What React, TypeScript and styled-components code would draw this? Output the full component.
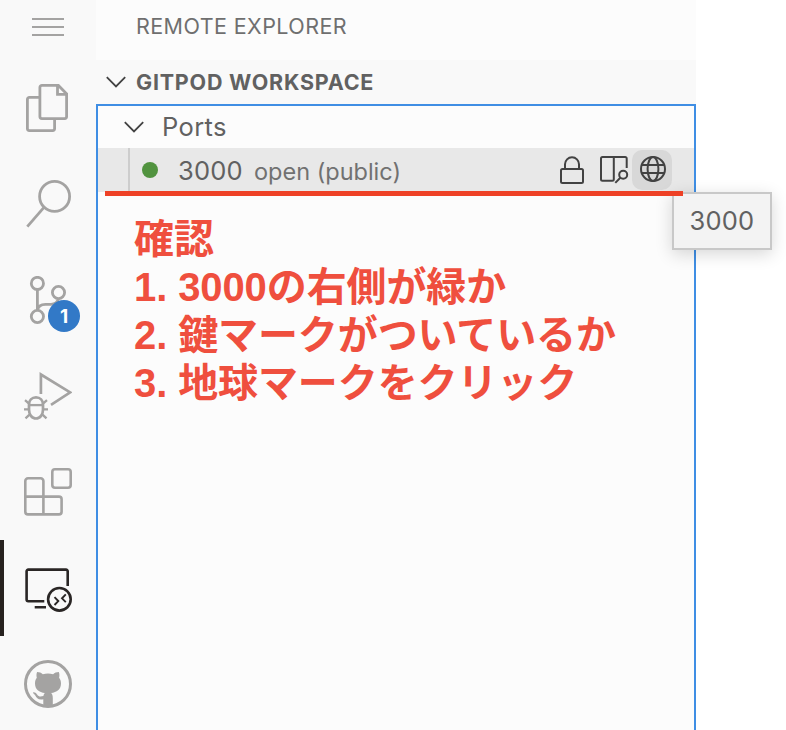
import React from "react";
import styled, { createGlobalStyle } from "styled-components";

const Global = createGlobalStyle`
  * { box-sizing: border-box; }
  html, body { margin: 0; background: #fff; overflow: hidden; }
  body { font-family: Inter, "Liberation Sans", sans-serif; color: #616161; }
  svg { display: block; }
`;

const Window = styled.div`
  display: flex;
  width: 786px;
  height: 730px;
  overflow: hidden;
`;

const ActivityBar = styled.nav`
  flex: 0 0 96px;
  display: flex;
  flex-direction: column;
  background: #f9f9f9;
`;

const MenuSlot = styled.div`
  flex: 0 0 60px;
  display: flex;
  justify-content: center;
  padding-top: 17px;
`;

const ActivityItem = styled.div<{ $active?: boolean }>`
  position: relative;
  flex: 0 0 96px;
  display: flex;
  align-items: center;
  justify-content: center;
  color: ${(p) => (p.$active ? "#2a2625" : "#a4a3a2")};
  box-shadow: ${(p) => (p.$active ? "inset 4px 0 #27221f" : "none")};
`;

const Badge = styled.span`
  position: absolute;
  left: 48px;
  top: 48px;
  width: 32px;
  height: 32px;
  border-radius: 50%;
  background: #3279c7;
  color: #fff;
  font-size: 19px;
  font-weight: 700;
  line-height: 33px;
  text-align: center;
`;

const Sidebar = styled.aside`
  flex: 0 0 600px;
  display: flex;
  flex-direction: column;
  background: #fcfcfc;
`;

const Title = styled.div`
  height: 60px;
  padding-left: 40px;
  line-height: 52px;
  font-size: 21.5px;
  letter-spacing: 0.42px;
  color: #6f6f6f;
`;

const SectionHeader = styled.div`
  display: flex;
  align-items: center;
  gap: 10px;
  height: 44px;
  padding-left: 10px;
  background: #f9f9f9;
  font-size: 21.5px;
  font-weight: 700;
  letter-spacing: 0.78px;
  color: #616161;
`;

const Tree = styled.div`
  position: relative;
  flex: 1;
  border: 2px solid #3f8ee4;
  border-bottom: 0;
`;

const GroupRow = styled.div`
  display: flex;
  align-items: center;
  gap: 18px;
  height: 42px;
  padding-left: 26px;
  font-size: 25.5px;
  letter-spacing: 0.35px;
`;

const GroupLabel = styled.span`
  padding-bottom: 2px;
`;

const PortRow = styled.div`
  display: flex;
  align-items: center;
  height: 44px;
  background: #e8e8e8;
`;

const IndentGuide = styled.i`
  width: 2px;
  height: 44px;
  margin-left: 30px;
  background: #cdcdcd;
`;

const StatusDot = styled.i`
  width: 16px;
  height: 16px;
  margin: 0 20px 0 12px;
  border-radius: 50%;
  background: #51933f;
`;

const PortName = styled.span`
  width: 76px;
  font-size: 25.5px;
  letter-spacing: 0.2px;
  white-space: nowrap;
`;

const PortState = styled.span`
  flex: 1;
  padding-top: 3px;
  font-size: 23.5px;
  color: #717171;
`;

const Actions = styled.div`
  display: flex;
  margin-right: 22px;
  color: #424242;
`;

const Action = styled.span<{ $hover?: boolean }>`
  width: 40px;
  height: 40px;
  border-radius: 10px;
  background: ${(p) => (p.$hover ? "#d8d8d8" : "transparent")};
`;

const Underline = styled.div`
  position: absolute;
  z-index: 3;
  left: 7px;
  top: 85px;
  width: 578px;
  height: 5px;
  background: #ee4126;
`;

const Tooltip = styled.div`
  position: absolute;
  z-index: 2;
  left: 574px;
  top: 86px;
  width: 100px;
  height: 58px;
  border: 2px solid #c8c8c8;
  background: #f3f3f3;
  box-shadow: 0 4px 16px rgba(0, 0, 0, 0.16);
  font-size: 25.5px;
  letter-spacing: 0.2px;
  line-height: 54px;
  text-align: center;
`;

const Note = styled.div`
  margin: 23px 0 0 36px;
  font-family: "Liberation Sans", "Noto Sans CJK JP", sans-serif;
  font-size: 40px;
  font-weight: 700;
  letter-spacing: -0.1px;
  color: #ef4f3e;
`;

const NoteLine = styled.div`
  height: 48px;
  line-height: 48px;
  white-space: nowrap;
`;

type IconProps = { size?: number; width?: number; children: React.ReactNode };
const Icon = ({ size = 48, width = 2.8, children }: IconProps) => (
  <svg width={size} height={size} viewBox={`0 0 ${size} ${size}`} fill="none" stroke="currentColor" strokeWidth={width}>
    {children}
  </svg>
);

const Chevron = () => (
  <svg width="20" height="12" viewBox="0 0 20 12" fill="none" stroke="#424242" strokeWidth="1.8">
    <path d="M.8 1.2 10 10.4 19.2 1.2" />
  </svg>
);

const FilesIcon = () => (
  <Icon>
    <path d="M15 13.4H5.4a2 2 0 0 0-2 2v29.2a2 2 0 0 0 2 2h23.2a2 2 0 0 0 2-2V35M17.9 1.4h16.5l8.2 8.3v22.9a2 2 0 0 1-2 2H17.9a2 2 0 0 1-2-2V3.4a2 2 0 0 1 2-2ZM33.5 1.4v8.9h9" />
  </Icon>
);

const SearchIcon = () => (
  <Icon>
    <circle cx="30.6" cy="16.4" r="15" />
    <path d="M20.2 27.2 3.3 46.6" />
  </Icon>
);

const BranchIcon = () => (
  <Icon>
    <circle cx="13.4" cy="7.4" r="6.1" />
    <circle cx="34.5" cy="16.5" r="6.1" />
    <circle cx="13.4" cy="40.5" r="6.1" />
    <path d="M13.4 13.5v21M34.5 22.6c-1 4-4 5.7-7.5 5.7h-5.5c-5 0-7.5 2.5-8 6" />
  </Icon>
);

const DebugIcon = () => (
  <Icon width={2.7}>
    <path d="M16.9 22V2.5L46.2 20.4 27 32.8" />
    <path d="M12 25.4c4.200 0 7 3.100 7 7.300v5.100c0 4.600-2.800 8.700-7 8.700s-7-4.100-7-8.700v-5.100c0-4.200 2.800-7.300 7-7.300Z" />
    <path d="M5 33.100h14" strokeWidth="2.3" />
    <path d="M1 28.200 5.500 32M23 28.200 18.500 32M0 37.400h4.500M24 37.400h-4.500M1.500 46.400l4.800-4.600M22.500 46.400l-4.800-4.600" strokeWidth="2.3" />
  </Icon>
);

const ExtensionsIcon = () => (
  <Icon width={2.6}>
    <path d="M4 10.300h12.700a2.700 2.700 0 0 1 2.700 2.700v15.600h15.500a2.700 2.700 0 0 1 2.700 2.700v12.400a2.700 2.700 0 0 1-2.700 2.700H4a2.700 2.700 0 0 1-2.700-2.700V13A2.700 2.700 0 0 1 4 10.300ZM1.300 28.600h18.100v17.800" />
    <rect x="28.3" y="1.3" width="18.4" height="18.4" rx="2.7" />
  </Icon>
);

const RemoteIcon = () => (
  <Icon width={2.6}>
    <path d="M20.300 37.300H4.300a1.700 1.700 0 0 1-1.700-1.700V7.300a1.700 1.700 0 0 1 1.700-1.700h37.700a1.700 1.700 0 0 1 1.700 1.700V22M10.700 43.300H22" />
    <circle cx="35.4" cy="35.3" r="11.3" />
    <path d="m30.500 33.200 3.800 3.900-3.800 3.900M41.800 30.400l-3.800 3.900 3.800 3.900" strokeWidth="1.9" />
  </Icon>
);

const GithubIcon = () => (
  <Icon width={3}>
    <circle cx="24" cy="24" r="22.5" />
    <path
      d="M19.300 46.500v-7.200c-5 1-6.700-1.300-8-3.800-.8-1.500-2.700-2.100-2.200-2.900.7-.9 2.700 0 4 1.800 1.500 2 2.600 2.700 6.300 1.700.2-1.500.8-2.500 1.500-3-5.700-.7-9.900-3.500-9.900-9.500 0-2.500.6-4.300 1.800-5.800-.5-2.100-.4-4.200.3-5.700 2.300 0 4.200.9 5.700 2.100 3.400-.8 6.900-.8 10.300 0 1.500-1.200 3.400-2.100 5.700-2.100.7 1.500.8 3.600.3 5.700 1.200 1.500 1.900 3.300 1.900 5.800 0 6-4.300 8.800-9.900 9.500 1.100 1 1.700 2.600 1.700 4.800v8.600Z"
      fill="currentColor"
      stroke="none"
    />
  </Icon>
);

const LockIcon = () => (
  <Icon size={40} width={2}>
    <rect x="9" y="19" width="22" height="14" rx="1.5" />
    <path d="M13 19v-4.700a7 7 0 0 1 14 0V19" />
  </Icon>
);

const PreviewIcon = () => (
  <Icon size={40} width={2}>
    <path d="M34.700 18V8.500a1.500 1.500 0 0 0-1.500-1.500H10.500A1.500 1.500 0 0 0 9 8.500v20.700a1.500 1.500 0 0 0 1.500 1.500h9.800a1.500 1.500 0 0 0 1.500-1.500V7" />
    <circle cx="31.2" cy="24.7" r="4" />
    <path d="m28.300 27.700-5 5.200" />
  </Icon>
);

const GlobeIcon = () => (
  <Icon size={40} width={2}>
    <circle cx="21" cy="19" r="12" />
    <ellipse cx="21" cy="19" rx="5.4" ry="12" />
    <path d="M10 15h22M10 23h22" />
  </Icon>
);

export default function App() {
  return (
    <Window>
      <Global />
      <ActivityBar>
        <MenuSlot>
          <svg width="32" height="20" viewBox="0 0 32 20" stroke="#a4a3a2" strokeWidth="2">
            <path d="M0 2h32M0 10h32M0 18h32" />
          </svg>
        </MenuSlot>
        <ActivityItem><FilesIcon /></ActivityItem>
        <ActivityItem><SearchIcon /></ActivityItem>
        <ActivityItem><BranchIcon /><Badge>1</Badge></ActivityItem>
        <ActivityItem><DebugIcon /></ActivityItem>
        <ActivityItem><ExtensionsIcon /></ActivityItem>
        <ActivityItem $active><RemoteIcon /></ActivityItem>
        <ActivityItem><GithubIcon /></ActivityItem>
      </ActivityBar>
      <Sidebar>
        <Title>REMOTE EXPLORER</Title>
        <SectionHeader><Chevron />GITPOD WORKSPACE</SectionHeader>
        <Tree>
          <GroupRow><Chevron /><GroupLabel>Ports</GroupLabel></GroupRow>
          <PortRow>
            <IndentGuide />
            <StatusDot />
            <PortName>3000</PortName>
            <PortState>open (public)</PortState>
            <Actions>
              <Action><LockIcon /></Action>
              <Action><PreviewIcon /></Action>
              <Action $hover><GlobeIcon /></Action>
            </Actions>
          </PortRow>
          <Underline />
          <Tooltip>3000</Tooltip>
          <Note>
            <NoteLine>確認</NoteLine>
            <NoteLine>1. 3000の右側が緑か</NoteLine>
            <NoteLine>2. 鍵マークがついているか</NoteLine>
            <NoteLine>3. 地球マークをクリック</NoteLine>
          </Note>
        </Tree>
      </Sidebar>
    </Window>
  );
}
